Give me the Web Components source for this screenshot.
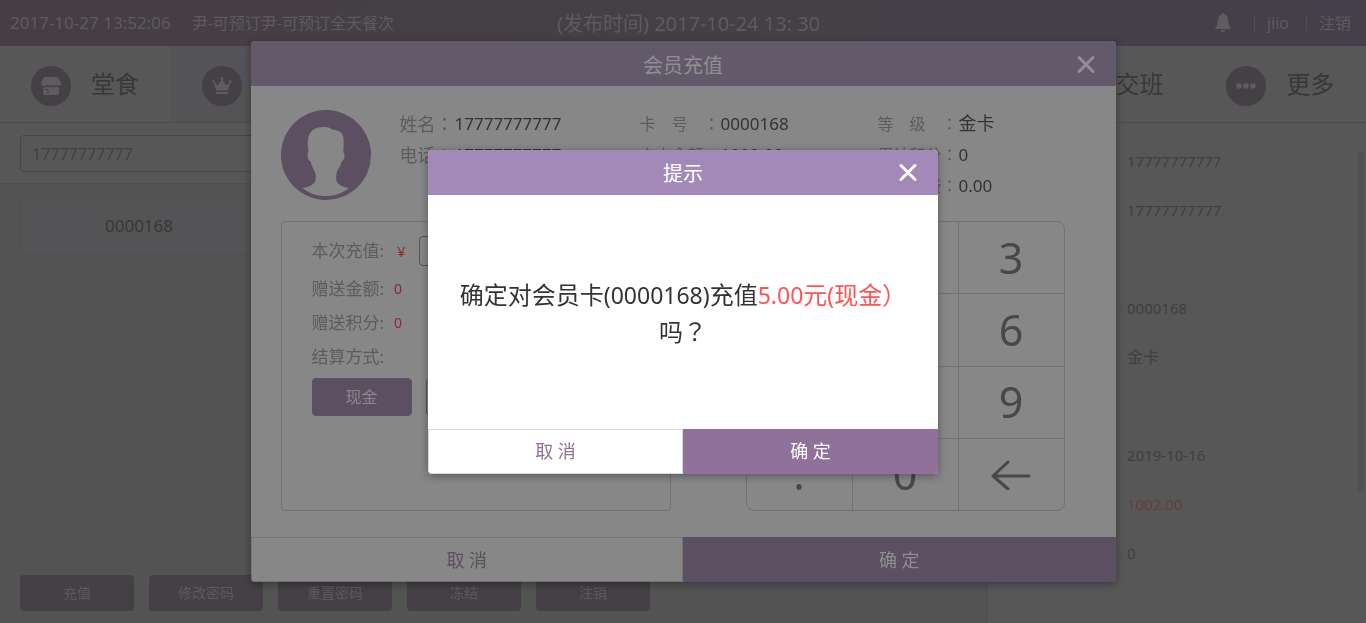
<!DOCTYPE html>
<html lang="zh-CN">
<head>
<meta charset="utf-8">
<title>会员充值</title>
<style>
  html, body { margin: 0; height: 100%; }
  body {
    background: #535353;
    color: #383838;
    font-family: "Noto Sans", "Noto Sans CJK SC", sans-serif;
    font-size: 16px;
    line-height: 24px;
  }
</style>
</head>
<body>
<member-app></member-app>

<script>
  const base = `
    *, *::before, *::after { box-sizing: border-box; }
    button, input { font: inherit; color: inherit; margin: 0; }
    button { cursor: pointer; }
    a { color: inherit; text-decoration: none; }
    .fw { font-family: "Noto Sans CJK TC", sans-serif; }
  `;

  function define(name, css, html) {
    const template = document.createElement('template');
    template.innerHTML = `<style>${base}${css}</style>${html}`;
    customElements.define(name, class extends HTMLElement {
      constructor() {
        super();
        this.attachShadow({ mode: 'open' }).append(template.content.cloneNode(true));
      }
    });
  }

  /* ---------- top bar ---------- */
  define('top-bar', `
    :host { display: block; color: #5e5a5e; background: linear-gradient(90deg, #453e45, #453f46 60%, #453f4b); }
    header { display: grid; grid-template-columns: 1fr auto 1fr; align-items: center; height: 46px; padding: 0 15px 0 10px; }
    .info { display: flex; gap: 21px; white-space: nowrap; }
    time { font-size: 17px; }
    .notice { font-size: 20px; white-space: nowrap; padding: 2px 0 0 16px; }
    nav { display: flex; align-items: center; justify-content: flex-end; }
    .bell { display: block; padding: 0; border: 0; background: none; height: 20px; margin-right: 23px; }
    .bell svg { display: block; }
    nav a { border-left: 1px solid #544e54; line-height: 16px; padding: 0 0 0 12px; margin-left: 17px; }
    nav .user { margin-left: 0; }
  `, `
    <header>
      <div class="info"><time>2017-10-27 13:52:06</time><span>尹-可预订尹-可预订全天餐次</span></div>
      <div class="notice">(发布时间) 2017-10-24 13: 30</div>
      <nav>
        <button class="bell" aria-label="消息">
          <svg width="16" height="20" viewBox="0 0 16 20" fill="#5e5c5e"><path d="M8 0c1 0 1.600.7 1.700 1.500C12 2.500 13.200 4.700 13.300 8c.1 3 .4 4.600 2.200 6.500.6.8.2 1.500-.7 1.500H1.200c-.9 0-1.300-.7-.7-1.500C2.300 12.600 2.600 11 2.700 8c.1-3.300 1.300-5.500 3.600-6.500C6.400.7 7 0 8 0zM5.500 17h5c-.3 1.400-1.300 2-2.500 2s-2.200-.6-2.500-2z"/></svg>
        </button>
        <a class="user" href="#user">jiio</a>
        <a href="#logout">注销</a>
      </nav>
    </header>
  `);

  /* ---------- navigation tabs ---------- */
  define('nav-tab', `
    :host { display: block; flex: 1 1 0; min-width: 0; }
    :host([active]) { background: #545457; }
    a { display: flex; align-items: center; gap: 20px; height: 76px; padding: 4px 0 0 31px; white-space: nowrap; overflow: hidden; }
    .icon { flex: none; display: grid; place-items: center; width: 40px; height: 40px; border-radius: 50%; background: #453f46; }
    .label { font-size: 24px; line-height: 32px; padding-bottom: 4px; }
  `, `<a href="#tab"><span class="icon"><slot name="icon"></slot></span><span class="label"><slot></slot></span></a>`);

  define('nav-tabs', `
    :host { display: flex; background: #575757; border-bottom: 1px solid #4b4b4b; }
    svg { display: block; }
  `, `
    <nav-tab>
      <svg slot="icon" width="20" height="20" viewBox="0 0 20 20"><path fill="#5e5c5e" d="M4 1h12q1 0 1.500 1L20 6.500c.3 2.500-1 3.500-2.300 3.500-1 0-1.700-.6-2.300-1.200-.9 1.400-3.600 1.500-4.500 0-.9 1.500-4 1.400-4.900 0C3.600 11.500 0 9.800 0 7L2.500 2Q3 1 4 1z"/><path fill="#5e5c5e" d="M2 11.500c1.600.4 3 0 4-.9 1.300 1.100 3.500 1.100 4.900 0 1.300 1 3.200 1.100 4.500 0 .8.6 1.700.9 2.600.8V17q0 2-2 2H4q-2 0-2-2z"/><path fill="none" stroke="#453f46" d="M2 13.500h5V18"/></svg>
      堂食
    </nav-tab>
    <nav-tab active>
      <svg slot="icon" width="20" height="18" viewBox="0 0 20 18" fill="#5e5c5e"><circle cx="10" cy="1.600" r="1.500"/><circle cx="1.500" cy="4.500" r="1.500"/><circle cx="18.500" cy="4.500" r="1.500"/><path d="M1.500 4.500L6 8.500l4-7 4 7 4.500-4L16 13.500H4zM4 15h12v2H4z"/></svg>
    </nav-tab>
    <nav-tab></nav-tab>
    <nav-tab></nav-tab>
    <nav-tab></nav-tab>
    <nav-tab></nav-tab>
    <nav-tab>交班</nav-tab>
    <nav-tab>
      <svg slot="icon" width="20" height="6" viewBox="0 0 20 6" fill="#5e5c5e"><circle cx="3" cy="3" r="2.800"/><circle cx="10" cy="3" r="2.800"/><circle cx="17" cy="3" r="2.800"/></svg>
      更多
    </nav-tab>
  `);

  /* ---------- member list (left) ---------- */
  define('member-list', `
    :host { display: flex; flex-direction: column; }
    .search { background: #575757; border-bottom: 1px solid #4d4d4d; padding: 12px 20px 11px; }
    input { display: block; width: 100%; height: 37px; border: 1px solid #464646; border-radius: 4px; background: none; padding: 0 11px; color: #424242; outline: 0; }
    .list { flex: 1; padding: 12px 20px; }
    .card { display: block; width: 238px; height: 60px; border: 1px solid #505053; border-radius: 4px; background: #545456; text-align: center; font-size: 17px; padding: 0; color: #3a3735; }
    .actions { display: flex; gap: 15px; padding: 0 20px 12px; }
    .actions button { width: 114px; height: 36px; border: 0; border-radius: 4px; background: #453f46; color: #5c595c; font-size: 14px; padding: 0; }
  `, `
    <form class="search"><input aria-label="查询会员" value="17777777777"></form>
    <div class="list"><button class="card">0000168</button></div>
    <div class="actions">
      <button>充值</button><button>修改密码</button><button>重置密码</button><button>冻结</button><button>注销</button>
    </div>
  `);

  /* ---------- member details (right) ---------- */
  define('member-details', `
    :host { display: flex; justify-content: space-between; background: #575757; border-left: 1px solid #4e4e4e; padding: 14px 2px 0 140px; color: #404040; }
    ul { list-style: none; margin: 0; padding: 0; font-size: 15px; }
    li { height: 49px; line-height: 49px; }
    .cjk { font-size: 16px; }
    .amount { color: #643f3f; }
    .thumb { width: 6px; height: 340px; margin-top: 14px; border-radius: 3px; background: #505050; }
  `, `
    <ul>
      <li>17777777777</li><li>17777777777</li><li></li><li>0000168</li><li class="cjk">金卡</li>
      <li></li><li>2019-10-16</li><li class="amount">1002.00</li><li>0</li>
    </ul>
    <div class="thumb"></div>
  `);

  /* ---------- modal window frame ---------- */
  define('modal-window', `
    :host { position: fixed; inset: 0; display: grid; place-items: center; }
    section { display: flex; flex-direction: column; width: var(--w); max-width: 100%; min-height: var(--h); border-radius: 4px; overflow: hidden; background: var(--surface); box-shadow: 0 2px 8px rgba(0, 0, 0, .35); }
    header { display: grid; grid-template-columns: 1fr auto 1fr; align-items: center; height: 45px; padding: 0 20px; background: var(--head); color: var(--on); font-size: 20px; }
    h2 { grid-column: 2; margin: 0; padding-top: 4px; font: inherit; line-height: 28px; }
    .close { justify-self: end; width: 20px; height: 20px; padding: 0; border: 0; background: none; color: inherit; }
    .close svg { display: block; }
    .body { flex: 1; display: grid; }
    footer { display: grid; grid-template-columns: 1fr 1fr; height: 45px; }
    footer button { border: 0; border-radius: 0; padding: 0; font-size: 18px; }
    .cancel { background: none; color: var(--accent); border: 1px solid var(--line); border-radius: 0 0 0 4px; }
    .ok { background: var(--accent); color: var(--on); }
  `, `
    <section role="dialog" aria-labelledby="title">
      <header>
        <h2 id="title"><slot name="title"></slot></h2>
        <button class="close" aria-label="关闭"><svg width="20" height="20" viewBox="0 0 20 20" fill="none" stroke="currentColor" stroke-width="3" stroke-linecap="round"><path d="M3 3.500l14 14M17 3.500L3 17.500"/></svg></button>
      </header>
      <div class="body"><slot></slot></div>
      <footer><button class="cancel">取 消</button><button class="ok">确 定</button></footer>
    </section>
  `);

  /* ---------- member summary ---------- */
  define('member-summary', `
    :host { display: flex; gap: 29px; }
    svg { flex: none; display: block; margin-top: 2px; }
    .columns { flex: 1; display: grid; grid-template-columns: 240px 238px 1fr; color: #5c5c5c; }
    .col { display: flex; flex-direction: column; }
    .col div { display: flex; height: 31px; line-height: 31px; white-space: pre; }
    dl { margin: 0; }
    dd { margin: 0; color: #333; font-size: 17px; padding-left: 1px; }
    .big { font-size: 18px; }
  `, `
    <svg width="90" height="90" viewBox="0 0 90 90"><circle cx="45" cy="45" r="45" fill="#5b4f61"/><path fill="#878787" d="M27.500 42C26.500 36 26.500 31 27.500 27 29 20 35 17 43 17c3 0 6 .5 9 3 6 0 9.500 2 10.500 8 .5 4 0 9-.2 14 2.200 1 1.200 9-1.800 9.500-.5 3.500-2 6-4 8.500-1.700 4-1.500 8-1 11 1.500 3.500 5.500 6 12.500 7-7 5.500-14 8-23 8s-17-2.500-23.300-8c6.300-1 11.300-3.500 12.600-7 .7-3 1-7-1.300-11-1.500-2.500-2.500-5-3.300-8.500-3.200-.5-3.900-8.500-2.200-9.500z"/></svg>
    <div class="columns">
      <dl class="col">
        <div><dt class="big">姓名<span class="fw" lang="zh-TW">：</span></dt><dd>17777777777</dd></div>
        <div><dt class="big">电话<span class="fw" lang="zh-TW">：</span></dt><dd>17777777777</dd></div>
      </dl>
      <dl class="col">
        <div><dt>卡&emsp;号&emsp;<span class="fw" lang="zh-TW">：</span></dt><dd>0000168</dd></div>
        <div><dt>卡内余额<span class="fw" lang="zh-TW">：</span></dt><dd>1002.00</dd></div>
      </dl>
      <dl class="col">
        <div><dt>等&emsp;级&emsp;<span class="fw" lang="zh-TW">：</span></dt><dd class="big">金卡</dd></div>
        <div><dt>累计积分<span class="fw" lang="zh-TW">：</span></dt><dd>0</dd></div>
        <div><dt>累计消费<span class="fw" lang="zh-TW">：</span></dt><dd>0.00</dd></div>
      </dl>
    </div>
  `);

  /* ---------- recharge form ---------- */
  define('recharge-form', `
    :host { display: block; border: 1px solid #727272; border-radius: 4px; padding: 10px 30px; color: #5c5c5c; font-size: 17px; }
    .row { display: flex; align-items: center; height: 34px; }
    .row.first { height: 38px; margin-bottom: 2px; }
    .val { color: #8c2a2e; font-size: 14px; margin-left: 10px; }
    .yen { font-size: 15px; margin: 0 13px; }
    input { flex: 1; min-width: 0; height: 30px; border: 1px solid #5b4f61; border-radius: 4px; background: none; color: #333; padding: 0 8px; }
    .pay { display: flex; gap: 14px; margin-top: 4px; }
    .pay button { width: 100px; height: 38px; border: 1px solid #5b4f61; border-radius: 4px; background: none; font-size: 16px; padding: 0; }
    .pay .on { background: #5b4f61; color: #8b878d; }
  `, `
    <div class="row first"><label for="sum">本次充值:</label><span class="val yen">¥</span><input id="sum"></div>
    <div class="row">赠送金额:<span class="val">0</span></div>
    <div class="row">赠送积分:<span class="val">0</span></div>
    <div class="row">结算方式:</div>
    <div class="pay"><button class="on">现金</button><button aria-label="其他方式"></button></div>
  `);

  /* ---------- numeric keypad ---------- */
  define('key-pad', `
    :host { display: grid; grid-template-columns: repeat(3, 1fr); grid-auto-rows: 1fr; gap: 1px; border: 1px solid #727272; border-radius: 8px; overflow: hidden; background: #727272; }
    button { display: grid; place-items: center; border: 0; border-radius: 0; padding: 0; background: #878787; color: #484848; font-size: 43px; line-height: 60px; }
  `, `
    <button>1</button><button>2</button><button>3</button>
    <button>4</button><button>5</button><button>6</button>
    <button>7</button><button>8</button><button>9</button>
    <button>.</button><button>0</button>
    <button aria-label="退格"><svg width="40" height="32" viewBox="0 0 40 32" fill="none" stroke="#484848" stroke-width="3" stroke-linecap="round" stroke-linejoin="round"><path d="M38 18H2M17 4L2 18l15 13"/></svg></button>
  `);

  define('recharge-body', `
    :host { display: flex; flex-direction: column; gap: 20px; padding: 22px 51px 26px 30px; }
    .lower { flex: 1; display: grid; grid-template-columns: 390px 319px; justify-content: space-between; }
  `, `
    <member-summary></member-summary>
    <div class="lower"><recharge-form></recharge-form><key-pad></key-pad></div>
  `);

  define('confirm-message', `
    :host { display: grid; place-items: center; padding: 2px 30px 0; }
    p { margin: 0; text-align: center; color: #333; font-size: 24px; line-height: 36px; }
    .n { font-size: 23px; }
    em { font-style: normal; color: #ff5454; }
  `, `
    <p>确定对会员卡<span class="n">(0000168)</span>充值<em><span class="n">5.00</span>元<span class="n">(</span>现金<span class="fw" lang="zh-TW">）</span></em>吗<span class="fw" lang="zh-TW">？</span></p>
  `);

  /* ---------- application shell ---------- */
  define('member-app', `
    :host { display: flex; flex-direction: column; min-height: 100vh; }
    main { flex: 1; display: grid; grid-template-columns: 1fr 380px; }
    .recharge { --w: 865px; --h: 541px; --surface: #878787; --head: #625a6b; --on: #918e93; --accent: #5b4f61; --line: #747474; }
    .confirm { --w: 510px; --h: 324px; --surface: #fff; --head: #a389b8; --on: #fff; --accent: #8f719c; --line: #d9d9d9; }
  `, `
    <top-bar></top-bar>
    <nav-tabs></nav-tabs>
    <main><member-list></member-list><member-details></member-details></main>
    <modal-window class="recharge"><span slot="title">会员充值</span><recharge-body></recharge-body></modal-window>
    <modal-window class="confirm"><span slot="title">提示</span><confirm-message></confirm-message></modal-window>
  `);
</script>
</body>
</html>
